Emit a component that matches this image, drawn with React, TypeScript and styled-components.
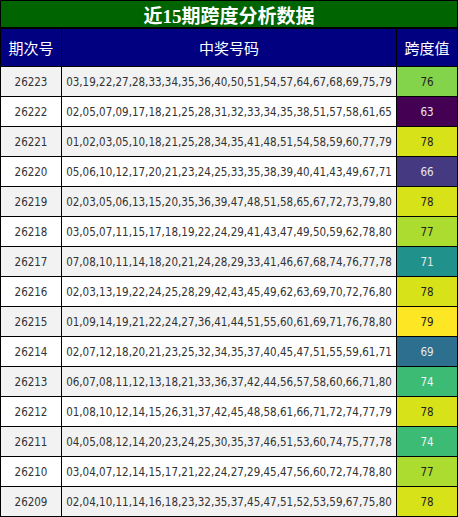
import React from "react";
import styled, { createGlobalStyle } from "styled-components";

const GlobalStyle = createGlobalStyle`
  html, body { margin: 0; padding: 0; background: #fff; }
  body { font-family: "DejaVu Sans Condensed", "DejaVu Sans", "Noto Sans CJK SC", sans-serif; }
`;

type Row = { issue: string; nums: string; span: number };

const rows: Row[] = [
  { issue: "26223", nums: "03,19,22,27,28,33,34,35,36,40,50,51,54,57,64,67,68,69,75,79", span: 76 },
  { issue: "26222", nums: "02,05,07,09,17,18,21,25,28,31,32,33,34,35,38,51,57,58,61,65", span: 63 },
  { issue: "26221", nums: "01,02,03,05,10,18,21,25,28,34,35,41,48,51,54,58,59,60,77,79", span: 78 },
  { issue: "26220", nums: "05,06,10,12,17,20,21,23,24,25,33,35,38,39,40,41,43,49,67,71", span: 66 },
  { issue: "26219", nums: "02,03,05,06,13,15,20,35,36,39,47,48,51,58,65,67,72,73,79,80", span: 78 },
  { issue: "26218", nums: "03,05,07,11,15,17,18,19,22,24,29,41,43,47,49,50,59,62,78,80", span: 77 },
  { issue: "26217", nums: "07,08,10,11,14,18,20,21,24,28,29,33,41,46,67,68,74,76,77,78", span: 71 },
  { issue: "26216", nums: "02,03,13,19,22,24,25,28,29,42,43,45,49,62,63,69,70,72,76,80", span: 78 },
  { issue: "26215", nums: "01,09,14,19,21,22,24,27,36,41,44,51,55,60,61,69,71,76,78,80", span: 79 },
  { issue: "26214", nums: "02,07,12,18,20,21,23,25,32,34,35,37,40,45,47,51,55,59,61,71", span: 69 },
  { issue: "26213", nums: "06,07,08,11,12,13,18,21,33,36,37,42,44,56,57,58,60,66,71,80", span: 74 },
  { issue: "26212", nums: "01,08,10,12,14,15,26,31,37,42,45,48,58,61,66,71,72,74,77,79", span: 78 },
  { issue: "26211", nums: "04,05,08,12,14,20,23,24,25,30,35,37,46,51,53,60,74,75,77,78", span: 74 },
  { issue: "26210", nums: "03,04,07,12,14,15,17,21,22,24,27,29,45,47,56,60,72,74,78,80", span: 77 },
  { issue: "26209", nums: "02,04,10,11,14,16,18,23,32,35,37,45,47,51,52,53,59,67,75,80", span: 78 },
];

const spanColors: Record<number, { bg: string; fg: string }> = {
  63: { bg: "#440154", fg: "#e8e8e8" },
  66: { bg: "#453a82", fg: "#e8e8e8" },
  69: { bg: "#2c6f8e", fg: "#e8e8e8" },
  71: { bg: "#21918c", fg: "#e8e8e8" },
  74: { bg: "#3cbb75", fg: "#f2f2f2" },
  76: { bg: "#84d44b", fg: "#222" },
  77: { bg: "#addc30", fg: "#222" },
  78: { bg: "#d8e219", fg: "#222" },
  79: { bg: "#fde725", fg: "#222" },
};

const Wrapper = styled.div`
  width: 458px;
`;

const Title = styled.div`
  height: 26px;
  border: 1px solid #000;
  background: #006400;
  color: #fff;
  display: flex;
  align-items: center;
  justify-content: center;
  font-family: "Liberation Serif", "Noto Sans CJK SC", serif;
  font-weight: bold;
  font-size: 19px;
`;

const Grid = styled.div`
  display: grid;
  grid-template-columns: 60px 334px 60px;
  grid-template-rows: 37px;
  grid-auto-rows: 29px;
  gap: 1px;
  padding: 1px;
  background: #000;
`;

const HeadCell = styled.div`
  background: #000080;
  color: #fff;
  display: flex;
  align-items: center;
  justify-content: center;
  font-family: "Noto Sans CJK SC", sans-serif;
  font-size: 15px;
`;

const Cell = styled.div<{ $alt: boolean }>`
  background: ${(p) => (p.$alt ? "#f2f2f2" : "#ffffff")};
  color: #333;
  display: flex;
  align-items: center;
  justify-content: center;
  font-size: 11.5px;
  white-space: nowrap;
`;

const SpanCell = styled.div<{ $bg: string; $fg: string }>`
  background: ${(p) => p.$bg};
  color: ${(p) => p.$fg};
  display: flex;
  align-items: center;
  justify-content: center;
  font-size: 11.5px;
`;

export default function App() {
  return (
    <Wrapper>
      <GlobalStyle />
      <Title>近15期跨度分析数据</Title>
      <Grid>
        <HeadCell>期次号</HeadCell>
        <HeadCell>中奖号码</HeadCell>
        <HeadCell>跨度值</HeadCell>
        {rows.map((r, i) => {
          const c = spanColors[r.span];
          const alt = i % 2 === 0;
          return (
            <React.Fragment key={r.issue}>
              <Cell $alt={alt}>{r.issue}</Cell>
              <Cell $alt={alt}>{r.nums}</Cell>
              <SpanCell $bg={c.bg} $fg={c.fg}>{r.span}</SpanCell>
            </React.Fragment>
          );
        })}
      </Grid>
    </Wrapper>
  );
}
